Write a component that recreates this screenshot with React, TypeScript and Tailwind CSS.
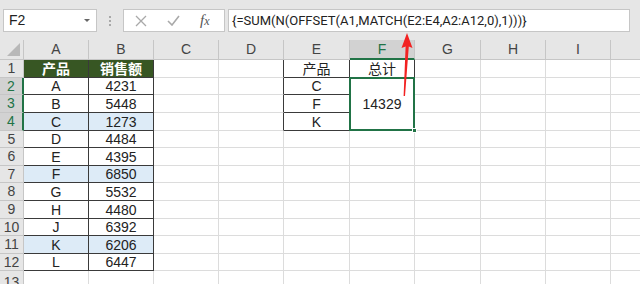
import React from "react";

// Excel-like sheet: formula bar on top, cell grid below, red arrow pointing at the formula.

const COLS = ["A", "B", "C", "D", "E", "F", "G", "H", "I", "J"];
const ROW_H = [18, 17, 18, 18, 17, 18, 17, 18, 18, 17, 18, 17];

const sales: [string, string][] = [
  ["产品", "销售额"],
  ["A", "4231"],
  ["B", "5448"],
  ["C", "1273"],
  ["D", "4484"],
  ["E", "4395"],
  ["F", "6850"],
  ["G", "5532"],
  ["H", "4480"],
  ["J", "6392"],
  ["K", "6206"],
  ["L", "6447"],
];
const BLUE_ROWS = [4, 7, 11];
const lookup: Record<string, string> = { "E1": "产品", "F1": "总计", "E2": "C", "E3": "F", "E4": "K" };

const cellFont = "font-['Liberation_Sans','Noto_Sans_CJK_SC',sans-serif]";

function Cell({ r, c }: { r: number; c: number }) {
  const col = COLS[c];
  const inSales = c <= 1 && r >= 1 && r <= 12;
  const inLookup = (col === "E" || col === "F") && r >= 1 && r <= 4;
  const darkRight = inSales || inLookup || (col === "D" && r >= 1 && r <= 4);
  const darkBottom = inSales || inLookup;

  let text = "";
  let cls = "bg-white text-[#222]";
  if (inSales) {
    text = sales[r - 1][c];
    if (r === 1) cls = "bg-[#375623] text-white font-bold";
    else if (BLUE_ROWS.includes(r)) cls = "bg-[#ddebf7] text-[#222]";
  } else if (lookup[col + r]) {
    text = lookup[col + r];
  }

  return (
    <div
      className={`flex items-center justify-center border-r border-b text-[14px] leading-none ${cls} ${
        darkRight ? "border-r-[#3a3a3a]" : "border-r-[#dcdcdc]"
      } ${darkBottom ? "border-b-[#3a3a3a]" : "border-b-[#dcdcdc]"}`}
      style={{ gridRow: r + 1, gridColumn: c + 2 }}
    >
      {text}
    </div>
  );
}

export default function App() {
  const cells: React.ReactNode[] = [];
  for (let r = 1; r <= 13; r++) {
    for (let c = 0; c < COLS.length; c++) {
      const col = COLS[c];
      if (col === "F" && r >= 2 && r <= 4) continue;
      cells.push(<Cell key={col + r} r={r} c={c} />);
    }
  }

  return (
    <div className={`relative w-[640px] h-[284px] overflow-hidden bg-white ${cellFont}`}>
      {/* formula bar */}
      <div className="flex h-[40px] items-start bg-[#e6e6e6] pl-[3px] pr-[10px] pt-[9px]">
        <div className="flex h-[23px] w-[94px] items-center justify-between border border-[#c6c6c6] bg-white pl-[5px] pr-[6px] text-[14px] text-[#222]">
          <span>F2</span>
          <span className="h-0 w-0 border-x-[3px] border-t-[3px] border-x-transparent border-t-[#666]" />
        </div>
        <div className="ml-[12px] mr-[12px] flex h-[23px] flex-col items-center justify-center gap-[2px]">
          <span className="h-[2px] w-[2px] bg-[#a8a8a8]" />
          <span className="h-[2px] w-[2px] bg-[#a8a8a8]" />
          <span className="h-[2px] w-[2px] bg-[#a8a8a8]" />
        </div>
        <div className="flex h-[23px] w-[102px] items-center border border-[#c6c6c6] bg-white">
          <svg className="ml-[11px]" width="12" height="12" viewBox="0 0 12 12">
            <path d="M1 1 L11 11 M11 1 L1 11" stroke="#a9a9a9" strokeWidth="1.3" fill="none" />
          </svg>
          <svg className="ml-[20px]" width="13" height="11" viewBox="0 0 13 11">
            <path d="M1 6 L5 10 L12 1" stroke="#a9a9a9" strokeWidth="1.6" fill="none" />
          </svg>
          <span className="ml-[20px] font-['Liberation_Serif',serif] text-[15px] italic text-[#555]">
            f<span className="text-[12px]">x</span>
          </span>
        </div>
        <div className="ml-[3px] flex h-[23px] flex-1 items-center border border-[#c6c6c6] bg-white pl-[3px] font-['Roboto',sans-serif] text-[13px] text-[#222]">
          {"{=SUM(N(OFFSET(A1,MATCH(E2:E4,A2:A12,0),1)))}"}
        </div>
      </div>

      {/* sheet */}
      <div
        className="grid"
        style={{
          gridTemplateColumns: "24px 65px 65px 65px 65px 66px 65px 66px 65px 65px 65px",
          gridTemplateRows: `20px ${ROW_H.map((h) => h + "px").join(" ")} 30px`,
        }}
      >
        <div className="relative border-r border-b border-[#c6c6c6] bg-[#e6e6e6]" style={{ gridRow: 1, gridColumn: 1 }}>
          <span className="absolute bottom-[3px] right-[3px] h-0 w-0 [border-bottom:13px_solid_#b8b8b8] [border-left:13px_solid_transparent]" />
        </div>
        {COLS.map((col, i) => (
          <div
            key={col}
            className={`flex items-center justify-center border-r text-[14px] ${
              col === "F"
                ? "border-b-2 border-b-[#217346] border-r-[#c6c6c6] bg-[#d2d2d2] text-[#217346]"
                : "border-b border-[#c6c6c6] bg-[#e6e6e6] text-[#444]"
            }`}
            style={{ gridRow: 1, gridColumn: i + 2 }}
          >
            {col === "J" ? "" : col}
          </div>
        ))}
        {Array.from({ length: 13 }, (_, i) => i + 1).map((r) => {
          const sel = r >= 2 && r <= 4;
          return (
            <div
              key={r}
              className={`flex items-center justify-center border-b text-[14px] ${
                sel
                  ? "border-r-2 border-r-[#217346] border-b-[#c6c6c6] bg-[#d2d2d2] text-[#217346]"
                  : "border-r border-[#c6c6c6] bg-[#e6e6e6] text-[#444]"
              } ${r === 13 ? "items-start pt-[1px]" : ""}`}
              style={{ gridRow: r + 1, gridColumn: 1 }}
            >
              {r}
            </div>
          );
        })}
        {cells}
        {/* merged, selected F2:F4 */}
        <div
          className="relative flex items-center justify-center border-r border-b border-[#3a3a3a] bg-white text-[14px] text-[#222]"
          style={{ gridRow: "3 / span 3", gridColumn: 7 }}
        >
          14329
          <span className="pointer-events-none absolute -left-[1px] -top-[1px] -right-[1px] -bottom-[1px] border-2 border-[#217346]" />
          <span className="absolute -bottom-[3px] -right-[3px] h-[5px] w-[5px] border border-white bg-[#217346]" />
        </div>
      </div>

      {/* red arrow */}
      <svg className="pointer-events-none absolute left-0 top-0" width="640" height="284">
        <polygon points="407,33 412.5,48 408.8,46.5 405,96 403.6,96 405.6,46.5 401.5,48" fill="#f22222" />
      </svg>
    </div>
  );
}
